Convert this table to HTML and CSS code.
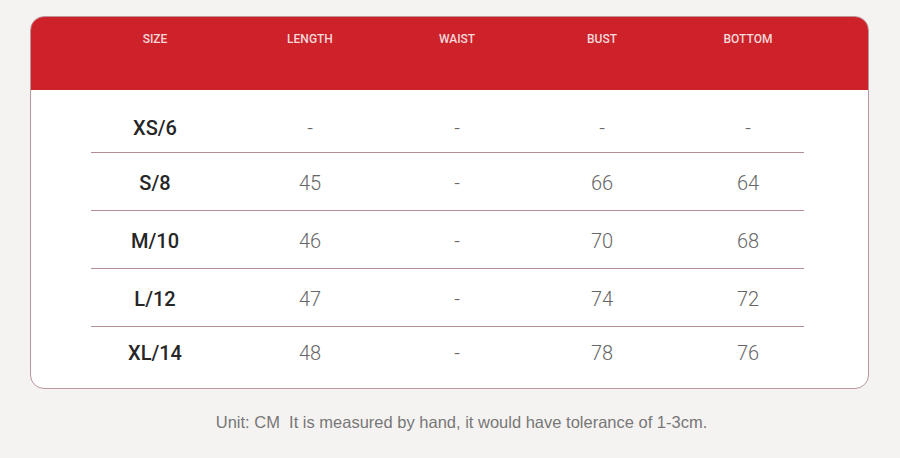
FILE: index.html
```html
<!DOCTYPE html>
<html lang="en">
<head>
<meta charset="utf-8">
<title>Size chart</title>
<link rel="stylesheet" href="styles.css">
</head>
<body>
<div class="page">
  <div class="card">
    <div class="head grid">
      <div>SIZE</div><div>LENGTH</div><div>WAIST</div><div>BUST</div><div>BOTTOM</div>
    </div>
    <div class="body">
      <div class="row grid first"><div class="size">XS/6</div><div class="num">-</div><div class="num">-</div><div class="num">-</div><div class="num">-</div></div>
      <div class="row grid"><div class="size">S/8</div><div class="num">45</div><div class="num">-</div><div class="num">66</div><div class="num">64</div></div>
      <div class="row grid"><div class="size">M/10</div><div class="num">46</div><div class="num">-</div><div class="num">70</div><div class="num">68</div></div>
      <div class="row grid"><div class="size">L/12</div><div class="num">47</div><div class="num">-</div><div class="num">74</div><div class="num">72</div></div>
      <div class="row grid last"><div class="size">XL/14</div><div class="num">48</div><div class="num">-</div><div class="num">78</div><div class="num">76</div></div>
    </div>
  </div>
  <p class="note">Unit: CM&nbsp; It is measured by hand, it would have tolerance of 1-3cm.</p>
</div>
</body>
</html>
```
FILE: styles.css
```css
html, body {
  margin: 0;
  padding: 0;
  background: #f5f3f2;
}
.page {
  padding: 16px 31px 0 30px;
}
.card {
  background: #ffffff;
  border: 1px solid #b9979c;
  border-radius: 14px;
  overflow: hidden;
}
.grid {
  display: grid;
  grid-template-columns: 128px 182px 112px 178px 114px;
  text-align: center;
}
.head {
  background: #cd2229;
  height: 73px;
  padding: 0 64px 0 60px;
  box-sizing: border-box;
  padding-top: 15px;
  color: #f5d8da;
  font-family: Roboto, "DejaVu Sans", sans-serif;
  font-weight: 500;
  font-size: 12px;
  line-height: 14px;
}
.body {
  padding: 5px 64px 3px 60px;
}
.row {
  align-items: center;
  border-bottom: 1px solid #b38e93;
  padding-top: 3px;
  box-sizing: border-box;
  height: 58px;
}
.row.first {
  padding-top: 9px;
}
.row.last {
  border-bottom: none;
  padding-top: 0;
  padding-bottom: 6px;
}
.size {
  font-family: Roboto, "DejaVu Sans", sans-serif;
  font-weight: 500;
  font-size: 20px;
  color: #262626;
}
.num {
  font-family: Roboto, "DejaVu Sans", sans-serif;
  font-weight: 300;
  font-size: 20px;
  color: #666666;
}
.note {
  margin: 24px 0 0 0;
  padding-left: 24px;
  text-align: center;
  font-family: "Liberation Sans", Arial, sans-serif;
  font-size: 16.5px;
  color: #777777;
}
```
